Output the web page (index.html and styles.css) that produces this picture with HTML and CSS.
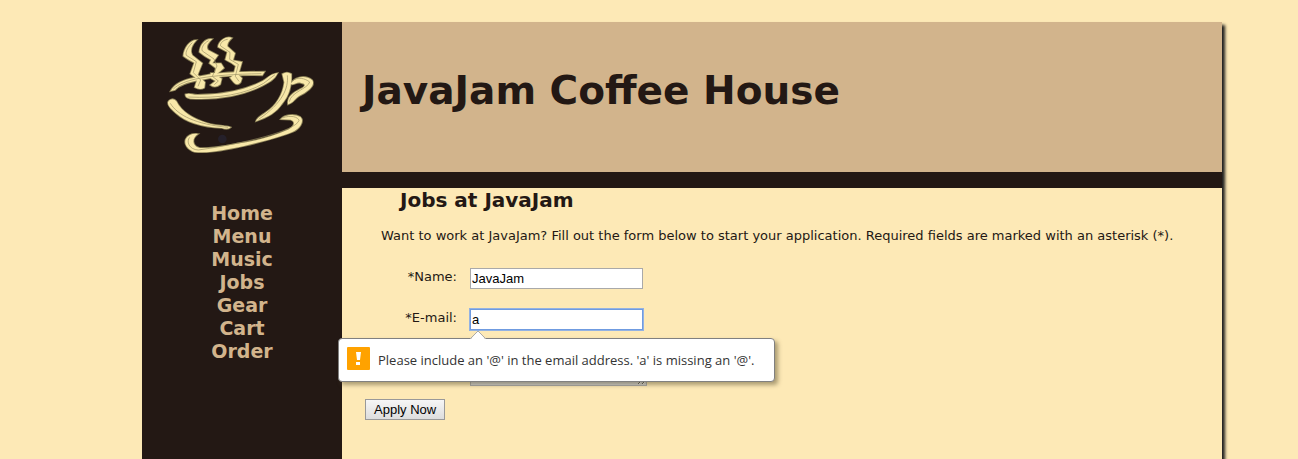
FILE: index.html
```html
<!DOCTYPE html>
<html lang="en">
<head>
<meta charset="utf-8">
<title>JavaJam Coffee House Jobs</title>
<link rel="stylesheet" href="styles.css">
</head>
<body>
<div class="wrapper">
  <aside class="sidebar">
    <svg class="logo" viewBox="0 0 600 450" aria-hidden="true">
      <defs>
        <g id="cup">
          <path d="M164 60C143 60 126 84 124 108C135 117 147 123 157 128L145 161L166 177L158 202Q174 211 187 203L189 187L167 164L181 130L151 106C142 90 151 73 164 60Z"/>
          <path d="M211 57C190 54 174 73 172 96C184 106 194 113 207 119L202 130L221 144L219 159L206 159L205 174L221 183L205 195Q220 206 235 193L239 176L221 165L246 144L237 130L211 130L228 106L198 90C190 79 200 67 211 57Z"/>
          <path d="M270 54C253 46 229 64 228 81L256 96L250 119L267 128L281 138L274 166L264 173L275 187Q285 199 296 187L300 175L289 164L300 126L273 121L279 100L256 79C256 67 263 60 270 54Z"/>
          <path d="M86 213C98 190 126 179 158 173C205 160 255 155 368 155L361 166C284 164 226 168 170 181C137 187 112 195 99 210Z"/>
          <path d="M130 223C146 217 151 227 176 224C241 224 314 209 362 183C379 173 385 162 407 159C397 181 377 189 352 202C299 226 225 241 145 236Q130 234 130 223Z"/>
          <path d="M78 247C82 236 96 234 103 244C119 277 158 298 197 310C222 318 249 316 266 322Q258 330 240 324C180 322 129 305 101 279C88 266 77 259 78 247Z"/>
          <path d="M421 162Q435 153 448 162C450 192 443 226 419 253C404 276 381 291 342 304C345 293 359 286 370 278C404 257 423 221 427 187Z"/>
          <path d="M449 187C462 170 491 164 511 181C522 199 490 219 470 229C458 236 457 247 438 253C435 230 454 218 475 207C490 201 493 192 480 190C466 182 456 198 446 192Z"/>
          <path d="M416 298C426 284 457 280 475 291C488 303 474 326 451 336C409 353 352 367 306 378C252 389 207 400 158 396C135 389 126 371 131 358C137 346 150 340 168 342C148 355 150 378 173 384C205 386 247 378 284 371C338 364 393 350 434 331C454 322 465 306 446 299Z"/>
        </g>
      </defs>
      <use href="#cup" class="cup-edge"/>
      <use href="#cup" class="cup-fill"/>
      <g class="grooves">
        <path d="M151 68C139 79 129 96 133 106L163 125L154 158L176 180L168 199"/>
        <path d="M200 62C184 70 177 85 181 93L216 117L225 138L211 169L229 183L217 194"/>
        <path d="M257 58C241 60 233 73 236 78L264 97L263 118L289 133L280 169L291 184"/>
        <path d="M94 207C124 178 194 164 358 161"/>
        <path d="M139 231C229 236 311 223 365 190L399 164"/>
        <path d="M85 250C107 286 161 313 258 322"/>
        <path d="M436 166C440 205 422 248 350 298"/>
        <path d="M451 183C467 169 489 175 503 186C498 206 447 216 442 245"/>
        <path d="M421 294C446 284 468 291 471 301C463 332 309 370 169 390C141 389 132 364 143 352"/>
      </g>
      <circle class="speck" cx="241" cy="357" r="13"/>
    </svg>
    <nav>
      <ul class="nav-list">
        <li><a href="#home">Home</a></li>
        <li><a href="#menu">Menu</a></li>
        <li><a href="#music">Music</a></li>
        <li><a href="#jobs">Jobs</a></li>
        <li><a href="#gear">Gear</a></li>
        <li><a href="#cart">Cart</a></li>
        <li><a href="#order">Order</a></li>
      </ul>
    </nav>
  </aside>
  <div class="page">
    <header class="banner"><h1>JavaJam Coffee House</h1></header>
    <main class="content">
      <h2>Jobs at JavaJam</h2>
      <p class="intro">Want to work at JavaJam? Fill out the form below to start your application. Required fields are marked with an asterisk (*).</p>
      <form class="job-form" novalidate>
        <div class="row">
          <label for="name">*Name:</label>
          <input class="field" type="text" id="name" value="JavaJam" required>
        </div>
        <div class="row">
          <label for="email">*E-mail:</label>
          <div class="email-box">
            <input class="field field-active" type="email" id="email" value="a" required>
            <div class="bubble" role="alert">
              <svg class="bubble-arrow" viewBox="0 0 18 10" aria-hidden="true"><path class="arrow-fill" d="M1 10L9 1L17 10Z"/><path class="arrow-line" d="M1 9L9 1L17 9"/></svg>
              <svg class="warning" viewBox="0 0 23 23" aria-hidden="true"><rect class="warning-box" width="23" height="23" rx="1"/><path class="warning-mark" d="M9 5H14L13 13H10ZM9 15H13V18H9Z"/></svg>
              <span>Please include an '@' in the email address. 'a' is missing an '@'.</span>
            </div>
          </div>
        </div>
        <div class="row row-unlabelled">
          <textarea class="area" rows="2" aria-label="Experience" required></textarea>
        </div>
        <button class="submit" type="submit">Apply Now</button>
      </form>
    </main>
  </div>
</div>
</body>
</html>
```
FILE: styles.css
```css
* { box-sizing: border-box; }
body {
  margin: 0;
  min-height: 100vh;
  padding: 22px 76px 0 142px;
  display: flex;
  background: #fde9b6;
  color: #231814;
  font: 13px/16px Verdana, "DejaVu Sans", sans-serif;
}
.wrapper {
  flex: 1;
  display: grid;
  grid-template-columns: 200px 1fr;
  background: #231814;
  box-shadow: 3px 3px 3px #1e1e1e;
}
.logo { display: block; width: 100%; margin-top: -2px; }
.cup-edge { fill: #8b8157; stroke: #8b8157; stroke-width: 5; }
.cup-fill { fill: #f8e8a9; }
.grooves { fill: none; stroke: #9a8f62; stroke-width: 2; }
.speck { fill: #25202a; }
.nav-list {
  list-style: none;
  margin: 0;
  padding: 32px 0 0;
  text-align: center;
  font-size: 19px;
  line-height: 23px;
  font-weight: bold;
}
.nav-list a { color: #d2b48c; text-decoration: none; }
.page { display: flex; flex-direction: column; }
.banner {
  height: 150px;
  padding: 0 20px 12px;
  display: flex;
  align-items: center;
  background: #d2b48c;
}
h1 { margin: 0; font-size: 39px; line-height: 46px; }
.content {
  flex: 1;
  margin-top: 16px;
  background: #fde9b6;
}
h2 { margin: 0; padding-left: 58px; font-size: 20px; line-height: 24px; }
.intro { margin: 16px 0 0; padding: 0 20px 0 39px; }
.job-form {
  padding: 24px 23px;
  display: flex;
  flex-direction: column;
  align-items: flex-start;
  gap: 20px;
}
.row { display: flex; align-items: flex-start; gap: 13px; }
.row label { width: 92px; line-height: 18px; text-align: right; }
.row-unlabelled { padding-left: 105px; }
.field, .area, .submit { font: 13px/15px "Liberation Sans", Arial, sans-serif; }
.field {
  display: block;
  width: 173px;
  height: 21px;
  padding: 1px;
  border: 1px solid #a9a9a9;
  background: #fff;
  color: #000;
}
.field-active { border-color: #6f9be0; outline: 1px solid #93b2e3; }
.area {
  width: 177px;
  height: 36px;
  border: 1px solid #a9a9a9;
  background: #d3d3d3;
}
.submit {
  margin-top: -7px;
  height: 21px;
  padding: 1px 8px;
  border: 1px solid #999;
  background: linear-gradient(#f6f6f6, #ddd);
  color: #000;
}
.email-box { position: relative; }
.bubble {
  position: absolute;
  z-index: 1;
  top: 29px;
  left: -132px;
  min-width: 437px;
  height: 44px;
  padding: 0 8px;
  display: flex;
  align-items: center;
  gap: 8px;
  white-space: nowrap;
  border: 1px solid #808080;
  border-radius: 4px;
  background: #fff;
  color: #333;
  box-shadow: 3px 3px 4px rgba(90, 80, 50, .5);
  font: 13px/18px "Open Sans", "Noto Sans", sans-serif;
}
.bubble-arrow { position: absolute; top: -9px; left: 130px; width: 18px; height: 10px; }
.arrow-fill { fill: #fff; }
.arrow-line { fill: none; stroke: #aaa; }
.warning { width: 23px; height: 23px; margin-bottom: 3px; }
.warning-box { fill: #ffa200; }
.warning-mark { fill: #fff; }
```
